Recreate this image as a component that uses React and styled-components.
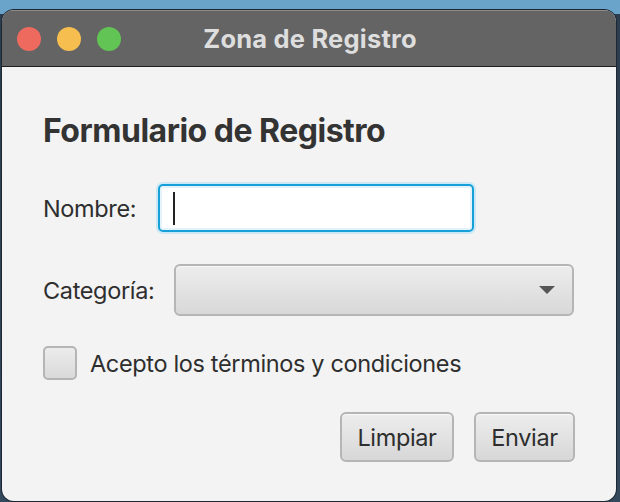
import React from 'react';
import styled, { createGlobalStyle } from 'styled-components';

const GlobalStyle = createGlobalStyle`
  html, body {
    margin: 0;
    padding: 0;
    height: 502px;
    overflow: hidden;
  }
  body {
    background: linear-gradient(#6ba4cb 0, #6ba4cb 14px, #2b3d4f 14px, #34495c 100%);
    font-family: Inter, "Noto Sans", sans-serif;
  }
`;

const Desktop = styled.div`
  padding: 10px 4px 0 2px;
  height: 502px;
  box-sizing: border-box;
`;

const Window = styled.div`
  height: 491px;
  border-radius: 12px;
  overflow: hidden;
  background: #f3f3f3;
  box-shadow: 0 0 0 1px #1c2733;
  display: flex;
  flex-direction: column;
`;

const TitleBar = styled.div`
  height: 57px;
  flex: none;
  background: #646464;
  border-top: 1px solid #8c8c8c;
  border-bottom: 1px solid #1e1e1e;
  box-sizing: border-box;
  position: relative;
  display: flex;
  align-items: center;
  justify-content: center;
`;

const Lights = styled.div`
  position: absolute;
  left: 15px;
  top: 16px;
  display: flex;
  gap: 16px;
`;

const Light = styled.span`
  width: 24px;
  height: 24px;
  border-radius: 50%;
  background: ${p => p.color};
`;

const Title = styled.div`
  color: #dedede;
  font-weight: 700;
  font-size: 25.5px;
  letter-spacing: 0.2px;
  margin-left: 2px;
`;

const Content = styled.div`
  padding: 43px 41px 0 41px;
  display: flex;
  flex-direction: column;
`;

const Heading = styled.h1`
  margin: 0;
  font-size: 32px;
  line-height: 42px;
  font-weight: 700;
  color: #333333;
  letter-spacing: -0.5px;
`;

const Row = styled.div`
  display: flex;
  align-items: center;
  margin-top: ${p => p.top}px;
  height: ${p => p.h}px;
  gap: ${p => p.gap}px;
`;

const Label = styled.span`
  font-size: 23.5px;
  color: #2e2e2e;
  letter-spacing: -0.35px;
`;

const TextField = styled.div`
  width: 316px;
  height: 48px;
  margin-left: 2px;
  box-sizing: border-box;
  background: #ffffff;
  border: 2px solid #17a0d8;
  border-radius: 5px;
  box-shadow: 0 0 0 2px #cbe8f5, inset 0 0 0 2px #e4f3fa;
  display: flex;
  align-items: center;
  padding-left: 13px;
`;

const Caret = styled.span`
  width: 2px;
  height: 33px;
  background: #222;
`;

const Select = styled.div`
  width: 400px;
  height: 52px;
  box-sizing: border-box;
  border: 2px solid #b5b5b5;
  border-radius: 6px;
  background: linear-gradient(#ededed, #d8d8d8);
  box-shadow: inset 0 1px 0 #f8f8f8;
  display: flex;
  align-items: center;
  justify-content: flex-end;
  padding-right: 17px;
`;

const Arrow = styled.span`
  width: 0;
  height: 0;
  border-left: 8px solid transparent;
  border-right: 8px solid transparent;
  border-top: 8px solid #555555;
`;

const CheckBox = styled.span`
  width: 34px;
  height: 34px;
  box-sizing: border-box;
  border: 2px solid #b5b5b5;
  border-radius: 5px;
  background: linear-gradient(#ececec, #d9d9d9);
`;

const Buttons = styled.div`
  display: flex;
  justify-content: flex-end;
  gap: 20px;
  margin-top: 32px;
`;

const Button = styled.button`
  width: ${p => p.w}px;
  height: 50px;
  box-sizing: border-box;
  border: 2px solid #b5b5b5;
  border-radius: 6px;
  background: linear-gradient(#ededed, #d7d7d7);
  box-shadow: inset 0 1px 0 #f8f8f8;
  font-family: inherit;
  font-size: 23.5px;
  color: #2e2e2e;
  letter-spacing: -0.35px;
  padding: 0;
`;

export default function App() {
  return (
    <>
      <GlobalStyle />
      <Desktop>
        <Window>
          <TitleBar>
            <Lights>
              <Light color="#ee6a5f" />
              <Light color="#f5be4f" />
              <Light color="#61c454" />
            </Lights>
            <Title>Zona de Registro</Title>
          </TitleBar>
          <Content>
            <Heading>Formulario de Registro</Heading>
            <Row top={30} h={52} gap={20}>
              <Label>Nombre:</Label>
              <TextField>
                <Caret />
              </TextField>
            </Row>
            <Row top={30} h={52} gap={20}>
              <Label>Categoría:</Label>
              <Select>
                <Arrow />
              </Select>
            </Row>
            <Row top={30} h={34} gap={13}>
              <CheckBox />
              <Label>Acepto los términos y condiciones</Label>
            </Row>
            <Buttons>
              <Button w={114}>Limpiar</Button>
              <Button w={101}>Enviar</Button>
            </Buttons>
          </Content>
        </Window>
      </Desktop>
    </>
  );
}
